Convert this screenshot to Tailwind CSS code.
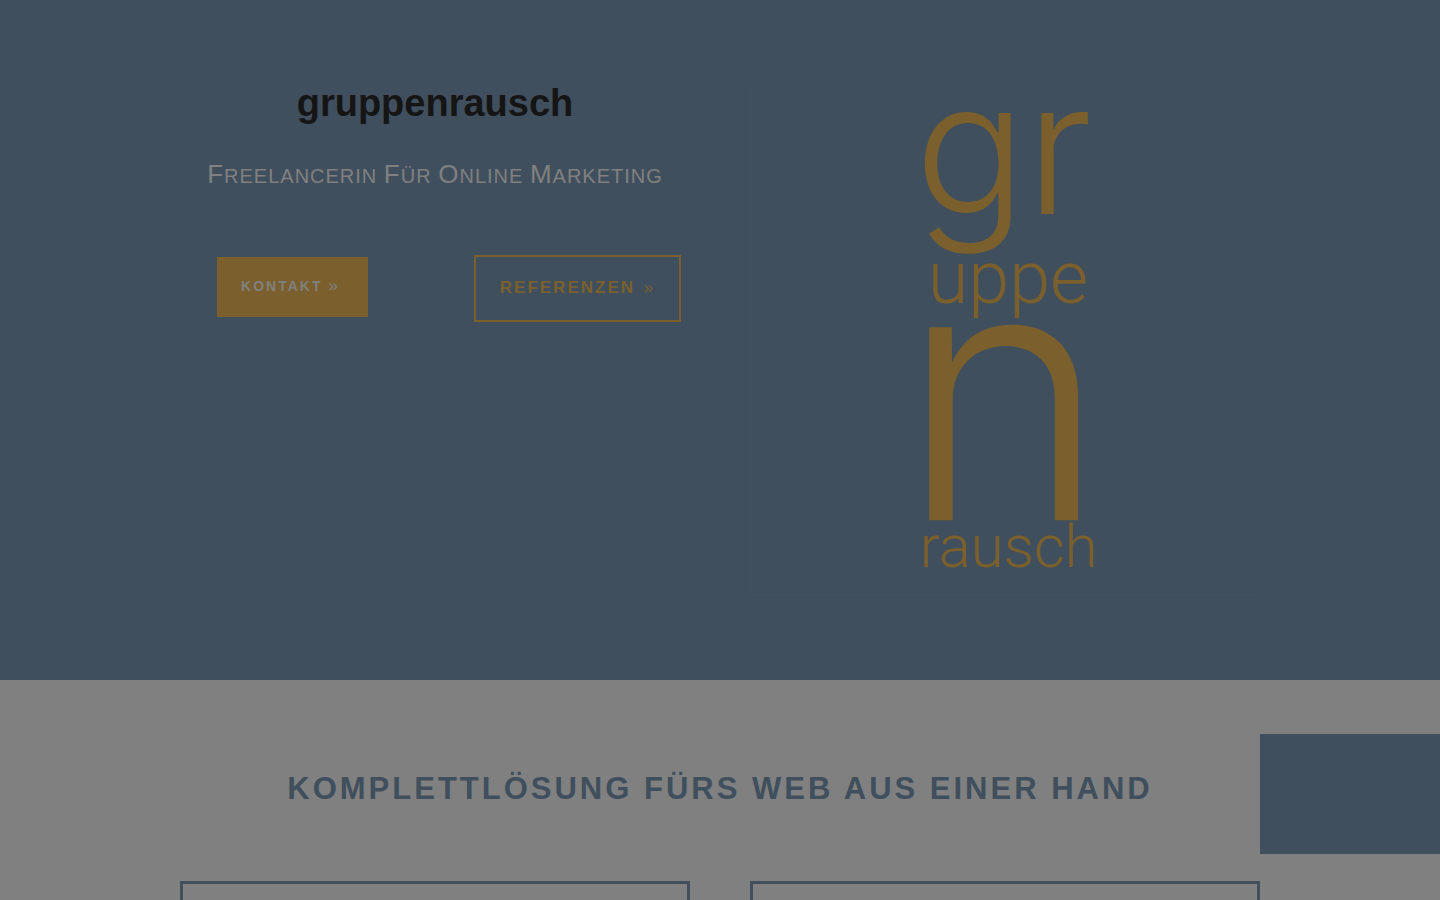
<!DOCTYPE html>
<html lang="de">
<head>
  <meta charset="UTF-8">
  <meta name="viewport" content="width=device-width, initial-scale=1.0">
  <title>gruppenrausch</title>
  <script src="https://cdn.jsdelivr.net/npm/@tailwindcss/browser@4"></script>
</head>
<body class="relative h-screen overflow-hidden bg-[#808080] font-['Liberation_Sans',Arial,sans-serif]">
  <header class="bg-[#404f5d] py-[85px]">
    <div class="w-3/4 mx-auto grid grid-cols-2 gap-[60px]">
      <div class="text-center">
        <h1 class="text-[38px] leading-9 font-bold text-[#151515]">gruppenrausch</h1>
        <p class="mt-[35px] text-[20px] leading-9 tracking-[1px] text-[#808080] uppercase whitespace-nowrap"><span class="text-[26px]">F</span>reelancerin <span class="text-[26px]">F</span>ür <span class="text-[26px]">O</span>nline <span class="text-[26px]">M</span>arketing</p>
        <div class="mt-[61px] grid grid-cols-2 gap-[60px] items-start">
          <div class="pt-0.5">
            <a href="#kontakt" class="inline-block px-6 pb-0.5 bg-[#7b602d] text-[#808080] text-sm leading-[58px] font-bold tracking-[2px] uppercase whitespace-nowrap">Kontakt <span class="mr-1 text-[17px] leading-none font-normal">»</span></a>
          </div>
          <div>
            <a href="#referenzen" class="inline-block px-6 pb-0.5 border-2 border-[#7b602d] text-[#7b602d] text-[17px] leading-[61px] font-bold tracking-[2px] uppercase whitespace-nowrap">Referenzen <span class="ml-0.5 text-[17px] leading-none font-normal">»</span></a>
          </div>
        </div>
      </div>
      <div class="border-l border-b border-[#435160]">
        <svg viewBox="0 0 510 510" class="block w-full" role="img" aria-label="gruppenrausch Logo">
          <g fill="#7b602d" class="font-light">
            <text x="164" y="129" font-size="185" class="font-[Inter,sans-serif]">gr</text>
            <text x="177" y="218" font-size="74" class="font-[Roboto,sans-serif]">uppe</text>
            <text x="149" y="436" font-size="354" class="font-[Inter,sans-serif]">n</text>
            <text x="169" y="483" font-size="60" class="font-[Roboto,sans-serif]">rausch</text>
          </g>
        </svg>
      </div>
    </div>
  </header>

  <main class="w-3/4 mx-auto">
    <h2 class="pt-[91px] text-center text-[31px] leading-9 font-bold tracking-[3px] text-[#404f5d] uppercase">Komplettlösung fürs Web aus einer Hand</h2>
    <div class="mt-[74px] grid grid-cols-2 gap-[60px]">
      <section class="h-80 border-3 border-[#404f5d]"></section>
      <section class="h-80 border-3 border-[#404f5d]"></section>
    </div>
  </main>

  <!-- side panel, sits over the page edge -->
  <aside class="absolute right-0 top-[734px] w-[180px] h-[120px] bg-[#404f5d]"></aside>
</body>
</html>
